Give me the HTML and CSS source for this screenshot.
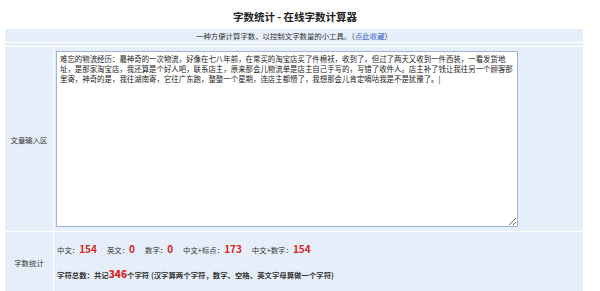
FILE: index.html
```html
<!DOCTYPE html>
<html lang="zh-CN">
<head>
  <meta charset="UTF-8">
  <meta name="viewport" content="width=device-width, initial-scale=1.0">
  <title>字数统计 - 在线字数计算器</title>
  <link rel="stylesheet" href="styles.css">
</head>
<body>
  <div class="wrap">
    <h1>字数统计 - 在线字数计算器</h1>

    <table class="tool">
      <colgroup>
        <col class="col-label">
        <col>
      </colgroup>
      <tr class="intro">
        <td colspan="2">一种方便计算字数，以控制文字数量的小工具。（<a href="#" class="fav">点此收藏</a>）</td>
      </tr>
      <tr class="spacer">
        <td colspan="2"></td>
      </tr>
      <tr class="input-row">
        <td class="label">文章输入区</td>
        <td class="field">
          <textarea id="content">难忘的物流经历：最神奇的一次物流，好像在七八年前，在常买的淘宝店买了件棉袄，收到了，但过了两天又收到一件西装，一看发货地址，是那家淘宝店，我还算是个好人吧，联系店主，原来那会儿物流单是店主自己手写的，写错了收件人。店主补了钱让我往另一个顾客那里寄，神奇的是，我往湖南寄，它往广东跑，整整一个星期，连店主都懵了，我想那会儿肯定嘀咕我是不是犹豫了。|</textarea>
        </td>
      </tr>
      <tr class="stats-row">
        <td class="label">字数统计</td>
        <td class="stats">
          <p class="counts">
            <span>中文：<b id="zh">154</b></span>
            <span>英文：<b id="en">0</b></span>
            <span>数字：<b id="num">0</b></span>
            <span>中文+标点：<b id="zhp">173</b></span>
            <span>中文+数字：<b id="zhn">154</b></span>
          </p>
          <p class="total">字符总数：共记<b id="total">346</b>个字符 (汉字算两个字符，数字、空格、英文字母算做一个字符)</p>
        </td>
      </tr>
    </table>
  </div>
</body>
</html>
```

FILE: styles.css
```css
body {
  margin: 0;
  padding: 0;
  font-family: "Noto Sans CJK SC", "Noto Sans", sans-serif;
  font-size: 7.4px;
  color: #333;
  background: #fff;
}
.wrap {
  width: 580px;
  margin-left: 5px;
}
h1 {
  font-size: 10.5px;
  line-height: 14px;
  margin: 10px 0 4px;
  text-align: center;
  color: #222;
}
.tool {
  width: 580px;
  table-layout: fixed;
  border-collapse: separate;
  border-spacing: 1px;
  margin-left: -1px;
  background: #fff;
}
.col-label {
  width: 48px;
}
.tool td {
  background: #e6eff9;
  padding: 0;
}
.intro td {
  height: 13px;
  text-align: center;
  line-height: 13px;
}
.fav {
  color: #3a5fc8;
  text-decoration: none;
}
.spacer td {
  height: 3px;
}
.label {
  text-align: center;
  vertical-align: middle;
}
.field {
  padding: 4px 0 4px 2px !important;
}
textarea {
  display: block;
  width: 462px;
  height: 176px;
  box-sizing: border-box;
  margin: 0;
  padding: 2px 3px;
  border: 1px solid #9fb3e0;
  background: #fff;
  font-family: "Noto Sans CJK SC", "Noto Sans", sans-serif;
  font-size: 7.43px;
  line-height: 10px;
  color: #222;
  outline: none;
}
.stats {
  padding: 10px 0 10px 3px !important;
}
.stats p {
  margin: 0;
  line-height: 14px;
}
.counts {
  display: flex;
  gap: 10px;
  margin-bottom: 10px !important;
}
.stats b {
  color: #d9231f;
  font-size: 10px;
}
.total {
  font-weight: bold;
}
```
